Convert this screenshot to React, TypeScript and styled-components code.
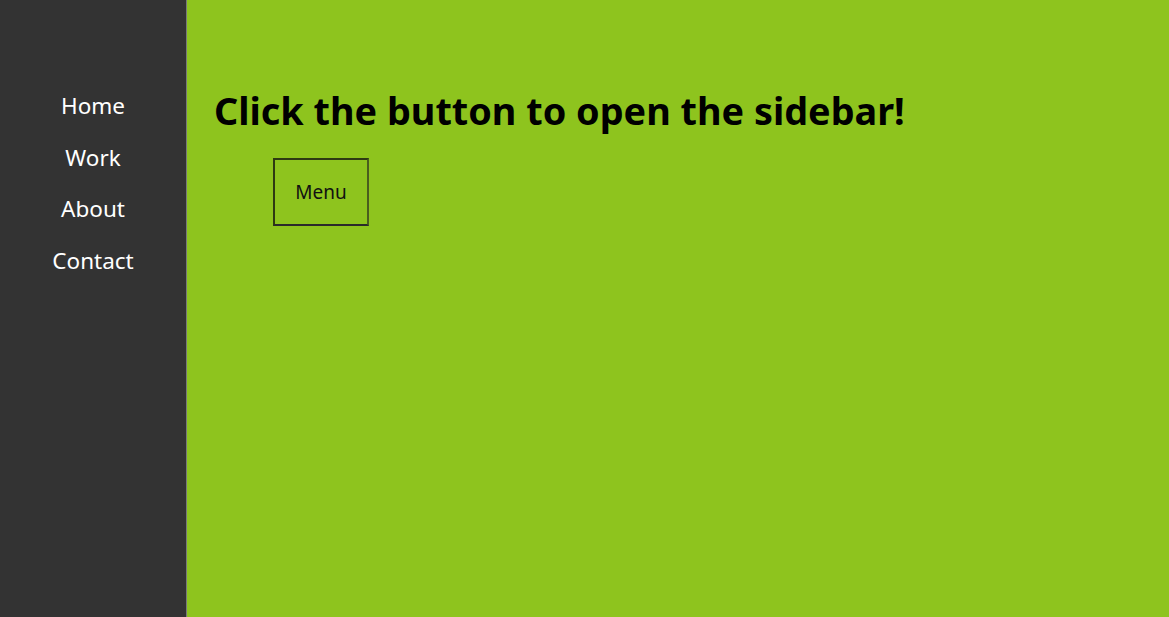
import React from "react";
import styled, { createGlobalStyle } from "styled-components";

const Global = createGlobalStyle`
  html, body { margin: 0; padding: 0; height: 100%; }
  body { font-family: "Noto Sans", "Open Sans", sans-serif; background: #8ec41e; }
  #root { height: 100%; }
`;

const Page = styled.div`
  display: flex;
  height: 617px;
`;

const Sidebar = styled.nav`
  width: 186px;
  flex: none;
  background: #333333;
  border-right: 1px solid #7a7a7a;
  display: flex;
  flex-direction: column;
  align-items: center;
  padding-top: 80px;
  box-sizing: content-box;
`;

const NavLink = styled.a`
  color: #ffffff;
  font-size: 22.5px;
  line-height: 51.7px;
  height: 51.7px;
  text-decoration: none;
`;

const Main = styled.main`
  flex: 1;
  background: #8ec41e;
  padding: 86px 27px 0;
`;

const Title = styled.h1`
  margin: 0;
  font-size: 37.8px;
  line-height: 50px;
  font-weight: 700;
  color: #000;
`;

const MenuButton = styled.button`
  margin: 22px 0 0 59px;
  width: 96px;
  height: 68px;
  background: transparent;
  border: 2px solid #2e3a12;
  border-right-color: #4a5e1e;
  border-bottom-color: #2a2a2a;
  font-family: inherit;
  font-size: 19px;
  color: #111;
  cursor: pointer;
`;

export default function App() {
  return (
    <>
      <Global />
      <Page>
        <Sidebar>
          <NavLink href="#">Home</NavLink>
          <NavLink href="#">Work</NavLink>
          <NavLink href="#">About</NavLink>
          <NavLink href="#">Contact</NavLink>
        </Sidebar>
        <Main>
          <Title>Click the button to open the sidebar!</Title>
          <MenuButton>Menu</MenuButton>
        </Main>
      </Page>
    </>
  );
}
